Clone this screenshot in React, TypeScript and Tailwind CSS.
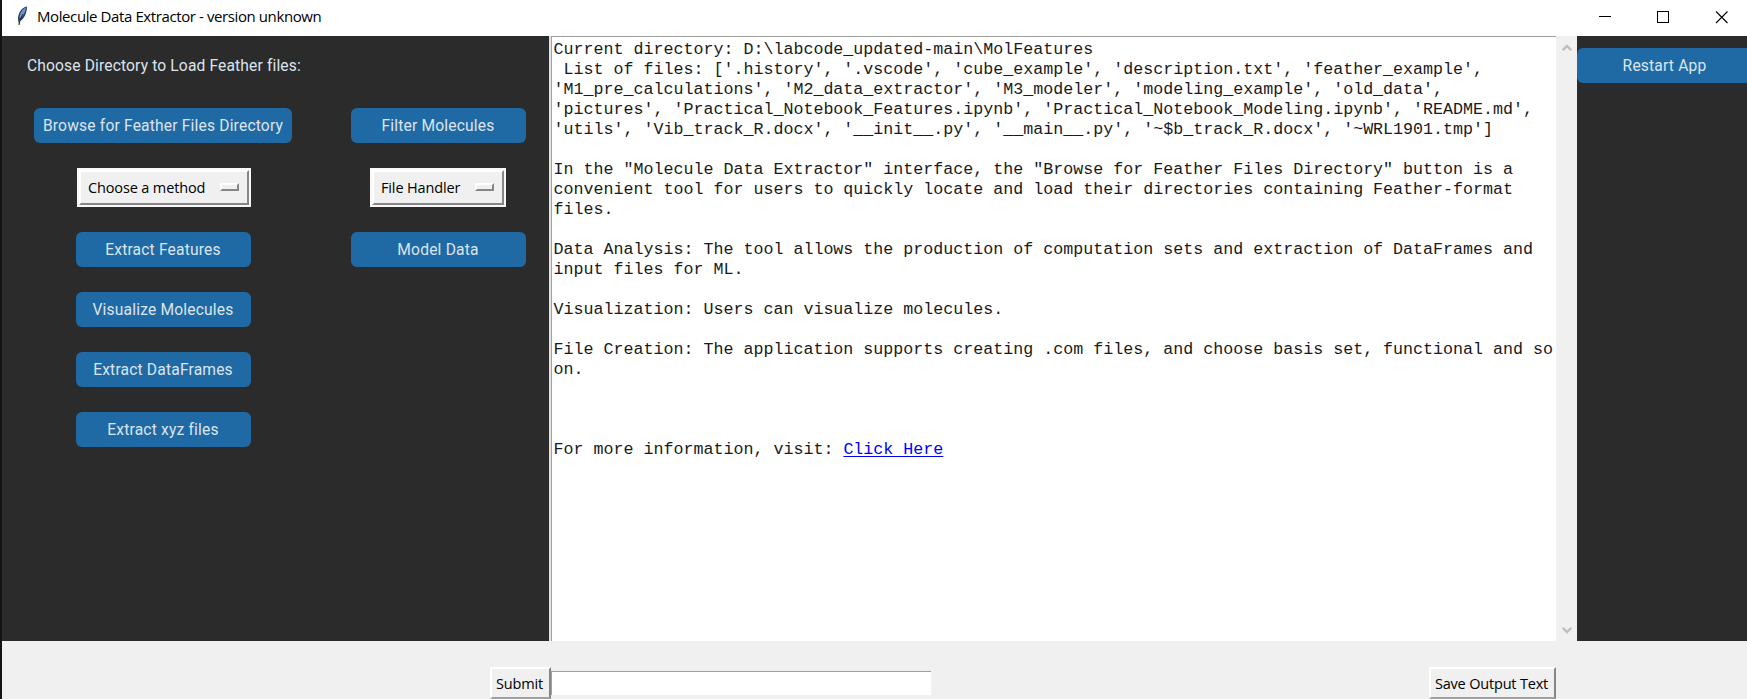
import type { ReactNode } from "react";

const OUTPUT = `Current directory: D:\\labcode_updated-main\\MolFeatures
 List of files: ['.history', '.vscode', 'cube_example', 'description.txt', 'feather_example',
'M1_pre_calculations', 'M2_data_extractor', 'M3_modeler', 'modeling_example', 'old_data',
'pictures', 'Practical_Notebook_Features.ipynb', 'Practical_Notebook_Modeling.ipynb', 'README.md',
'utils', 'Vib_track_R.docx', '__init__.py', '__main__.py', '~$b_track_R.docx', '~WRL1901.tmp']

In the "Molecule Data Extractor" interface, the "Browse for Feather Files Directory" button is a
convenient tool for users to quickly locate and load their directories containing Feather-format
files.

Data Analysis: The tool allows the production of computation sets and extraction of DataFrames and
input files for ML.

Visualization: Users can visualize molecules.

File Creation: The application supports creating .com files, and choose basis set, functional and so
on.`;

function CtkButton({ children, className = "w-[175px]" }: { children: ReactNode; className?: string }) {
  return (
    <button
      className={`flex h-[35px] shrink-0 items-center justify-center rounded-[6px] bg-[#1f6aa5] pt-[3px] font-['Roboto',sans-serif] text-[15.6px] tracking-[0.18px] whitespace-nowrap text-[#dce4ee] ${className}`}
    >
      {children}
    </button>
  );
}

function OptionMenu({ label, className, labelClass }: { label: string; className: string; labelClass: string }) {
  return (
    <div className={`flex h-[39px] border-2 border-[#f8f8f8] bg-[#f0f0f0] ${className}`}>
      <button className="flex flex-1 items-center justify-between border-2 border-t-white border-r-[#868686] border-b-[#868686] border-l-white pr-[8px] pl-[7px]">
        <span className={`mt-px font-['Open_Sans',sans-serif] text-[14.5px] whitespace-nowrap text-black ${labelClass}`}>{label}</span>
        <span className="mb-px h-[8px] w-[19px] border-2 border-t-white border-r-[#868686] border-b-[#868686] border-l-white" />
      </button>
    </div>
  );
}

function TkButton({ children, className }: { children: ReactNode; className: string }) {
  return (
    <button
      className={`flex h-[32px] items-center justify-center border-2 border-t-white border-r-[#868686] border-b-[#a0a0a0] border-l-white bg-[#f0f0f0] pt-px font-['Open_Sans',sans-serif] text-[14.5px] whitespace-nowrap text-black ${className}`}
    >
      {children}
    </button>
  );
}

function Feather() {
  return (
    <svg width="12" height="20" viewBox="0 0 12 20" className="mb-[4px] shrink-0">
      <path d="M10.8.5C8 .6 4.2 4 2.700 8.500c-.8 2.400-.9 4.500-.4 6.200l.6 4.100.9-3.600C7 13.500 9 10.500 10 7c.8-2.800 1.200-5.300.8-6.500z" fill="#333e4e" />
      <path d="M9.800 1.500C7.500 2.500 5 5.200 4 8.500c-.5 1.600-.6 3-.4 4.200C6.500 11 8 8.500 8.900 6c.6-1.800 1-3.500.9-4.500z" fill="#6297dd" />
      <path d="M7 8C5.500 10.500 4 13.500 3 19" stroke="#1c2b42" strokeWidth="1" fill="none" />
    </svg>
  );
}

function TitleBar() {
  return (
    <header className="flex h-[36px] shrink-0 items-center bg-white pl-[14px]">
      <Feather />
      <h1 className="mb-[3px] ml-[9px] font-['Open_Sans',sans-serif] text-[15px] tracking-[-0.4px] whitespace-nowrap text-black">
        Molecule Data Extractor - version unknown
      </h1>
      <svg className="ml-auto" width="148" height="36" viewBox="0 0 148 36" fill="none" stroke="#000" shapeRendering="crispEdges">
        <path d="M0 16.500h12" />
        <rect x="58.500" y="11.500" width="11" height="11" />
        <path d="M117 11.500l11.500 11.500M128.500 11.500L117 23" shapeRendering="auto" strokeWidth="1.100" />
      </svg>
    </header>
  );
}

function Chevron({ down = false }: { down?: boolean }) {
  return (
    <svg width="10" height="9" viewBox="0 0 10 9" fill="none" stroke="#bfbfbf" strokeWidth="2.400">
      <path d={down ? "M.8 1.800L5 6l4.200-4.200" : "M.8 7.200L5 3l4.200 4.200"} />
    </svg>
  );
}

export default function App() {
  return (
    <div className="flex h-[699px] w-[1747px] overflow-hidden bg-[#f0f0f0]">
      <div className="w-[2px] shrink-0 bg-[#141414]" />
      <div className="flex min-w-0 flex-1 flex-col">
        <TitleBar />
        <main className="flex h-[605px] shrink-0">
          <section className="w-[547px] shrink-0 bg-[#2b2b2b]">
            <p className="h-[72px] pt-[18px] pl-[25px] font-['Roboto',sans-serif] text-[15.6px] leading-[24px] tracking-[0.14px] text-[#dce4ee]">
              Choose Directory to Load Feather files:
            </p>
            <div className="flex">
              <div className="flex w-[322px] flex-col items-center gap-[25px]">
                <CtkButton className="w-[258px]">Browse for Feather Files Directory</CtkButton>
                <OptionMenu label="Choose a method" className="ml-0.5 w-[174px]" labelClass="tracking-[-0.14px]" />
                <CtkButton>Extract Features</CtkButton>
                <CtkButton>Visualize Molecules</CtkButton>
                <CtkButton>Extract DataFrames</CtkButton>
                <CtkButton>Extract xyz files</CtkButton>
              </div>
              <div className="flex w-[225px] flex-col items-center gap-[25px] pl-[3px]">
                <CtkButton>Filter Molecules</CtkButton>
                <OptionMenu label="File Handler" className="w-[136px]" labelClass="tracking-[-0.14px]" />
                <CtkButton>Model Data</CtkButton>
              </div>
            </div>
          </section>
          <section className="flex w-[1028px] shrink-0 border-l-2 border-[#e3e3e3]">
            <div className="flex-1 border-t border-l border-[#a0a0a0] bg-white pt-[3px] pl-[1.5px] font-['Liberation_Mono',monospace] text-[16.664px] leading-[20px] text-[#1a1a1a]">
              <pre className="font-['Liberation_Mono',monospace]">{OUTPUT}</pre>
              <div className="mt-[60px] flex gap-[10px]">
                <span>For more information, visit:</span>
                <a className="text-[#0000ff] underline underline-offset-2">Click Here</a>
              </div>
            </div>
            <div className="flex w-[21px] flex-col items-center justify-between pt-[7px] pb-[6px]">
              <Chevron />
              <Chevron down />
            </div>
          </section>
          <section className="flex-1 bg-[#2b2b2b] pt-[12px]">
            <CtkButton className="w-[175px]">Restart App</CtkButton>
          </section>
        </main>
        <footer className="flex flex-1 bg-[#f0f0f0] pt-[26px] pl-[488px]">
          <TkButton className="w-[61px] pr-0.5 tracking-[-0.2px]">Submit</TkButton>
          <input className="mt-[4px] h-[24px] w-[380px] border-t border-l border-[#a0a0a0] bg-white" />
          <TkButton className="ml-[498px] w-[127px] pr-0.5 tracking-[-0.18px]">Save Output Text</TkButton>
        </footer>
      </div>
    </div>
  );
}
